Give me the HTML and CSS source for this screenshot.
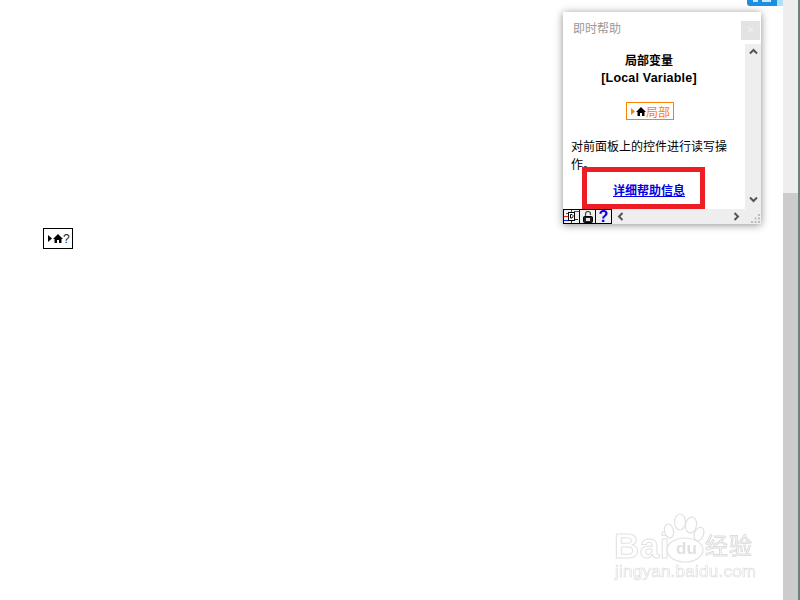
FILE: index.html
```html
<!DOCTYPE html>
<html lang="zh">
<head>
<meta charset="utf-8">
<title>即时帮助</title>
<link rel="stylesheet" href="styles.css">
</head>
<body>
<div class="page">
  <main class="canvas">
    <div class="node">
      <svg class="node-icon" width="15" height="9" viewBox="0 0 15 9"><path d="M0 1l4 3.500-4 3.500z" fill="#000"/><path d="M10 0L15 5H13.500V9H11V6H9V9H6.500V5H5z" fill="#000"/></svg><span class="node-q">?</span>
    </div>
    <div class="tab"><span class="tab-dark"><i class="tab-a"></i><i class="tab-b"></i></span><span class="tab-light"></span></div>
    <section class="help">
      <header class="help-head">
        <h1 class="help-title">即时帮助</h1>
        <span class="help-close">×</span>
      </header>
      <div class="help-middle">
        <div class="help-body">
          <h2 class="topic">局部变量<br><span class="topic-en">[Local Variable]</span></h2>
          <div class="chip-row">
            <span class="chip">
              <svg class="chip-icon" width="15" height="9" viewBox="0 0 15 9"><path d="M0 1l4 3.500-4 3.500z" fill="#ff8000"/><path d="M10 0L15 5H13.500V9H11V6H9V9H6.500V5H5z" fill="#000"/></svg>局部
            </span>
          </div>
          <p class="desc">对前面板上的控件进行读写操作。</p>
          <div class="link-row"><a class="link" href="#">详细帮助信息</a></div>
        </div>
        <div class="vbar">
          <svg width="9" height="7" viewBox="0 0 9 7"><path d="M1 5.500L4.500 2 8 5.500" fill="none" stroke="#555" stroke-width="2"/></svg>
          <svg width="9" height="7" viewBox="0 0 9 7"><path d="M1 1.500L4.500 5 8 1.500" fill="none" stroke="#555" stroke-width="2"/></svg>
        </div>
      </div>
      <footer class="help-foot">
        <span class="tool">
          <svg width="15" height="13" viewBox="0 0 15 13"><path d="M2 3.500H5M10 1.500H15M7.500 0V3" stroke="#e02020" fill="none"/><path d="M0 10.500H5M10 9.500H14M7.500 10V13" stroke="#1818e0" fill="none"/><path d="M0 6.500H4" stroke="#e02020"/><rect x="4.500" y="2.500" width="6" height="8" fill="#fff" stroke="#000"/><path d="M6.500 4.500h1.500l1 1v1l-1 1.500H6.500z" fill="none" stroke="#000"/></svg>
        </span>
        <span class="tool">
          <svg width="10" height="12" viewBox="0 0 10 12"><path d="M2.500 6V3a2.500 2.500 0 0 1 5 0v1" fill="none" stroke="#444" stroke-width="1.200"/><rect x="0.500" y="5.500" width="9" height="6" rx="1" fill="#222" stroke="#000"/><rect x="3" y="7" width="4" height="3" fill="#e8e8e8"/></svg>
        </span>
        <span class="tool tool-q">?</span>
        <div class="hbar">
          <svg width="7" height="9" viewBox="0 0 7 9"><path d="M5.500 1L2 4.500 5.500 8" fill="none" stroke="#555" stroke-width="2"/></svg>
          <svg width="7" height="9" viewBox="0 0 7 9"><path d="M1.500 1L5 4.500 1.500 8" fill="none" stroke="#555" stroke-width="2"/></svg>
        </div>
        <svg class="grip" width="10" height="9" viewBox="0 0 10 9"><path d="M7 0h2v2H7zM3.500 3.500h2v2h-2zM7 3.500h2v2H7zM0 7h2v2H0zM3.500 7h2v2h-2zM7 7h2v2H7z" fill="#bbb"/></svg>
      </footer>
      <div class="redbox"></div>
    </section>
    <div class="mark">
      <span class="mark-bai">Bai</span>
      <svg class="paw" width="44" height="52" viewBox="0 0 44 52" fill="#fff" stroke="#e2e2e2" stroke-width="1.200">
        <ellipse cx="6" cy="18" rx="4.500" ry="7" transform="rotate(-12 6 18)"/>
        <ellipse cx="17" cy="9" rx="5.500" ry="8"/>
        <ellipse cx="28" cy="12" rx="5.500" ry="8" transform="rotate(10 28 12)"/>
        <ellipse cx="36" cy="21" rx="4.500" ry="7" transform="rotate(22 36 21)"/>
        <ellipse cx="22" cy="37" rx="18" ry="12"/>
      </svg>
      <span class="mark-du">du</span>
      <span class="mark-cn">经验</span>
      <div class="mark-url">jingyan.baidu.com</div>
    </div>
  </main>
  <aside class="scroll"><div class="scroll-thumb"></div></aside>
</div>
</body>
</html>
```
FILE: styles.css
```css
* { box-sizing: border-box; }
html, body { margin: 0; height: 100%; overflow: hidden; background: #fff; }
body { font-family: "Liberation Sans", "Noto Sans CJK SC", sans-serif; }
.page { display: flex; height: 600px; width: 800px; }
.canvas { position: relative; flex: 1; background: #fff; }
.scroll { width: 17px; background: #eee; border-right: 2px solid #6e8378; display: flex; flex-direction: column; justify-content: flex-end; }
.scroll-thumb { height: 407px; background: #ccc; }

.node { position: absolute; left: 43px; top: 228px; width: 30px; height: 21px; border: 1px solid #000; display: flex; align-items: center; padding-left: 4px; font-size: 12px; background: #fff; }
.node-icon { flex: none; }
.node-q { color: #222; }

.tab { position: absolute; left: 747px; top: 0; width: 36px; height: 6px; display: flex; }
.tab-dark { width: 30px; background: #1b8fe0; border-radius: 0 0 0 3px; display: flex; padding-left: 6px; }
.tab-dark i { height: 2px; background: #cfe6f7; }
.tab-a { width: 5px; }
.tab-b { width: 9px; margin-left: 4px; }
.tab-light { flex: 1; background: #aee0fb; }

.help { position: absolute; left: 563px; top: 12px; width: 198px; height: 212px; background: #fff; box-shadow: 0 1px 8px rgba(0,0,0,.45); display: flex; flex-direction: column; }
.help-head { height: 32px; flex: none; display: flex; justify-content: space-between; padding: 9px 1px 0 10px; }
.help-title { margin: 0; font-size: 12px; line-height: 16px; font-weight: 400; color: #999; }
.help-close { width: 19px; height: 19px; background: #e3e3e3; color: #eee; font-size: 12px; line-height: 19px; text-align: center; font-weight: 700; }
.help-middle { flex: 1; display: flex; min-height: 0; }
.help-body { flex: 1; min-width: 0; padding: 0 18px 0 8px; font-size: 12px; color: #000; }
.topic { margin: 9px 0 0; font-size: 12px; line-height: 17px; font-weight: 700; text-align: center; }
.topic-en { letter-spacing: .2px; font-size: 12.500px; }
.chip-row { display: flex; justify-content: center; padding-left: 2px; margin-top: 15px; }
.chip { display: flex; align-items: center; width: 48px; height: 18px; border: 1px solid #ff8000; color: #ff8000; font-size: 12px; padding-left: 4px; }
.chip-icon { flex: none; }
.desc { margin: 18px 0 0; line-height: 18px; font-size: 12px; }
.link-row { margin-top: 9px; text-align: center; line-height: 16px; }
.link { color: #0000e6; font-weight: 700; font-size: 12px; }
.vbar { width: 16px; flex: none; background: #eee; display: flex; flex-direction: column; justify-content: space-between; align-items: center; padding: 4px 0 6px; }
.help-foot { height: 15px; flex: none; background: #eee; display: flex; align-items: flex-start; }
.tool { width: 17px; height: 15px; flex: none; border: 1px solid #000; margin-right: -1px; background: #f0f0f0; display: flex; align-items: center; justify-content: center; overflow: hidden; }
.tool svg { flex: none; }
.tool-q { color: #0000e6; font-size: 16px; font-weight: 700; line-height: 13px; }
.hbar { width: 123px; height: 15px; margin-left: 6px; display: flex; justify-content: space-between; align-items: center; }
.grip { margin: 5px 0 0 auto; }
.redbox { position: absolute; left: 19px; top: 155px; width: 123px; height: 42px; border: 5px solid #ee1c25; }

.mark { position: absolute; left: 613px; top: 514px; width: 145px; height: 70px; filter: blur(.4px); }
.mark-bai { position: absolute; left: 1px; top: 13px; font-size: 35px; line-height: 38px; font-weight: 700; color: #fff; -webkit-text-stroke: 1px #e2e2e2; letter-spacing: .5px; }
.paw { position: absolute; left: 50px; top: -1px; }
.mark-du { position: absolute; left: 63px; top: 26px; font-size: 17px; line-height: 18px; font-weight: 700; color: #e0e0e0; }
.mark-cn { position: absolute; left: 92px; top: 18px; font-size: 23px; line-height: 28px; color: #fff; -webkit-text-stroke: 1px #dedede; letter-spacing: 1px; }
.mark-url { position: absolute; left: 2px; top: 48px; font-size: 17px; line-height: 20px; color: #fff; -webkit-text-stroke: .7px #e0e0e0; letter-spacing: .25px; white-space: nowrap; }
```
